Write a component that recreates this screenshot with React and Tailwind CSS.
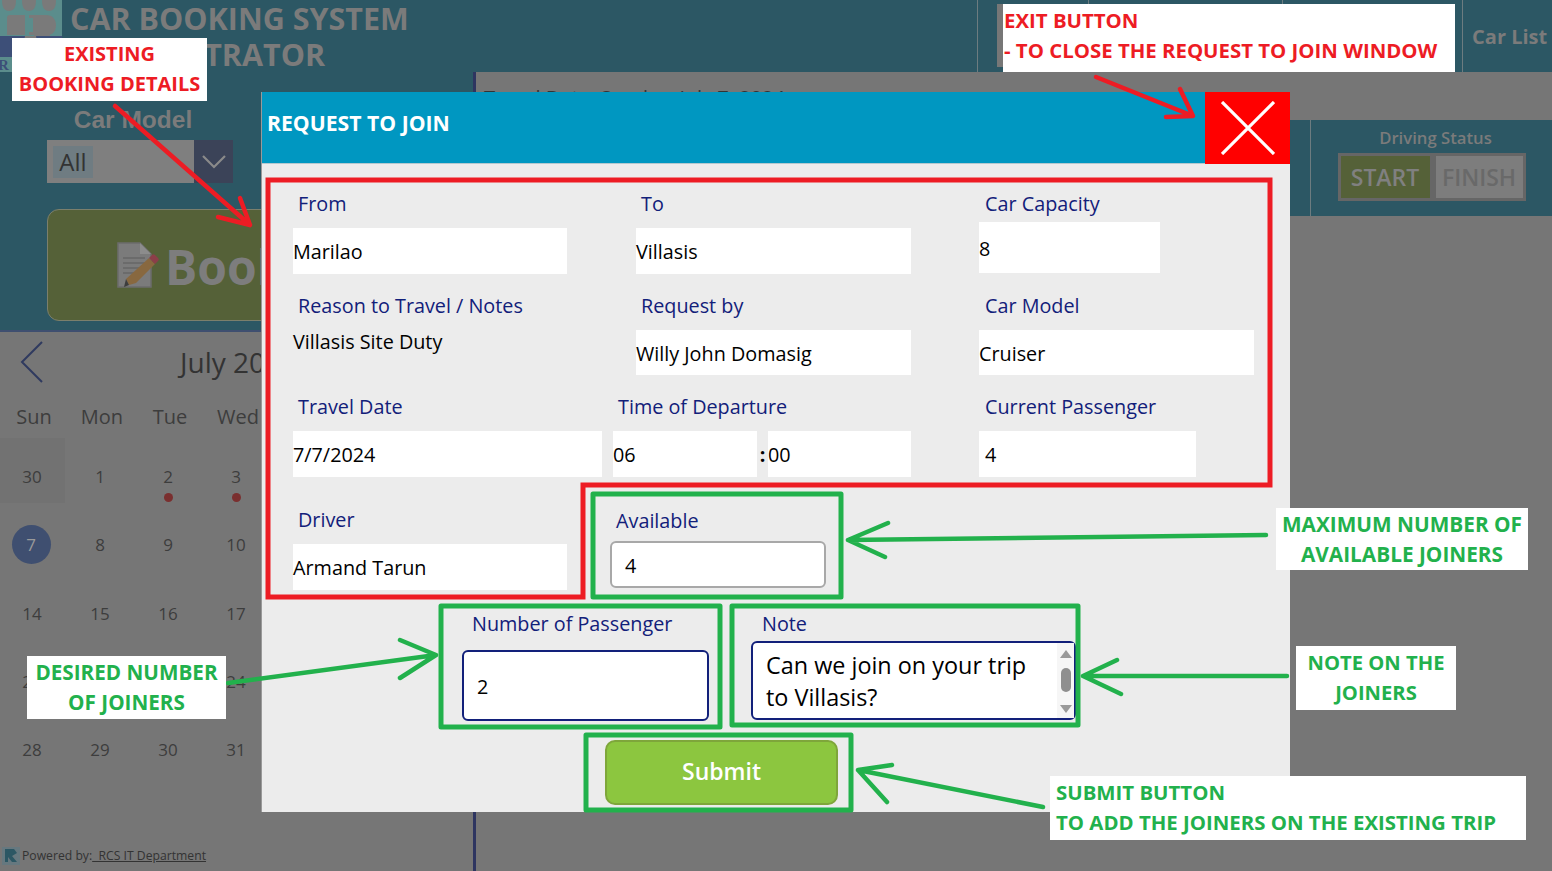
const WEEKDAYS = ["Sun", "Mon", "Tue", "Wed", "Thu", "Fri", "Sat"];
const DAYS = [
  30, 1, 2, 3, 4, 5, 6,
  7, 8, 9, 10, 11, 12, 13,
  14, 15, 16, 17, 18, 19, 20,
  21, 22, 23, 24, 25, 26, 27,
  28, 29, 30, 31, 1, 2, 3,
];

function Logo() {
  return (
    <svg width="62" height="72" viewBox="0 0 62 72" className="shrink-0">
      <rect width="62" height="72" fill="#5b8d8c" />
      <path d="M2 0h14c0 7-2 11-7 11S2 7 2 0ZM22 0h14c0 7-2 11-7 11S22 7 22 0ZM42 0h14c0 7-2 11-7 11S42 7 42 0Z" fill="#7a7a7a" />
      <path d="M7 18c0-2 1-3 3-3h36c7 0 10 5 10 10s-2 9-7 10H29V15h-4v20H7Z" fill="#7a7a7a" />
      <rect x="29" y="18" width="4" height="14" fill="#5b8d8c" />
      <path d="M34 35h16v1H34Z" fill="#7a7a7a" />
      <rect x="0" y="36" width="62" height="21" fill="#3d4f78" />
      <path d="M25 36h11l4 21H21Z" fill="#7a7a7a" />
      <rect x="0" y="57" width="62" height="15" fill="#5b8d8c" />
      <text x="-2" y="70" fontFamily="Liberation Serif, serif" fontWeight="700" fontSize="15" fill="#3d4f78">R</text>
    </svg>
  );
}

function BookIcon() {
  return (
    <svg width="42" height="46" viewBox="0 0 42 46" className="shrink-0">
      <path d="M1 1h22l11 11v33H1Z" fill="#7b7b7b" stroke="#6c6c6c" strokeWidth="1.5" />
      <path d="M23 1v11h11Z" fill="#8c8c8c" />
      <path d="M6 16h22M6 21h22M6 26h18M6 31h12" stroke="#676767" strokeWidth="1.5" />
      <path d="M9 37l3 6 7-2 19-19-6-6Z" fill="#88683f" />
      <path d="M32 16l3-3c1-1 2-1 3 0l3 3c1 1 1 2 0 3l-3 3Z" fill="#8b3f49" />
      <path d="M9 37l3 6-5 2Z" fill="#3d3d3d" />
    </svg>
  );
}

function Header() {
  return (
    <header className="flex h-[72px] bg-[#2c5764]">
      <Logo />
      <div className="ml-[8px] flex w-[900px] flex-col text-[30.5px] leading-[36px] font-bold text-[#7b7b7b]">
        <span>CAR BOOKING SYSTEM</span>
        <span>ADMINISTRATOR</span>
      </div>
      <div className="ml-[8px] h-full w-px bg-[#6d7c80]" />
      <div className="ml-[19px] mt-[4px] h-[63px] w-[6px] bg-[#777]" />
      <div className="ml-[85px] h-full w-px bg-[#6d7c80]" />
      <div className="ml-[193px] h-full w-px bg-[#6d7c80]" />
      <div className="ml-[179px] flex h-full w-[90px] items-center border-l border-[#6d7c80] pt-[2px] pl-[9px] text-[20px] font-bold whitespace-nowrap text-[#7b7b7b]">
        Car List
      </div>
    </header>
  );
}

function Sidebar() {
  return (
    <aside className="flex h-[799px] w-[473px] shrink-0 flex-col">
      <div className="flex h-[260px] flex-col border-b-2 border-[#3f4f70] bg-[#2c5764] px-[47px]">
        <div className="mt-[33px] w-[172px] text-center font-['Liberation_Sans'] text-[24.5px] leading-[30px] font-bold text-[#7b7b7b]">
          Car Model
        </div>
        <div className="mt-[5px] flex h-[43px] w-[186px] bg-[#7f7f7f]">
          <div className="flex flex-1 items-center pl-[6px]">
            <span className="flex h-[32px] w-[40px] items-center justify-center bg-[#6f7c82] text-[24px] text-[#333]">All</span>
          </div>
          <div className="flex w-[39px] items-center justify-center bg-[#3b4358]">
            <svg width="24" height="14" viewBox="0 0 24 14" fill="none" stroke="#8a8a8a" strokeWidth="2.2">
              <path d="M1 1l11 11L23 1" />
            </svg>
          </div>
        </div>
        <div className="mt-[26px] flex h-[112px] w-[300px] items-center rounded-[12px] border border-[#7b7f6c] bg-[#556138] pl-[69px]">
          <BookIcon />
          <span className="mt-[4px] ml-[6px] text-[48px] font-bold text-[#7d7d7d]">Book</span>
        </div>
      </div>
      <div className="relative flex-1">
        <div className="flex h-[67px] items-center pb-[8px] pl-[20px]">
          <svg width="24" height="42" viewBox="0 0 24 42" fill="none" stroke="#2f3a5f" strokeWidth="2">
            <path d="M22 1L2 21l20 20" />
          </svg>
          <span className="ml-[136px] text-[28px] whitespace-nowrap text-[#333]">July 2024</span>
        </div>
        <div className="grid w-[476px] grid-cols-7 text-center text-[20px] leading-[36px] text-[#3d3d3d]">
          {WEEKDAYS.map((day) => (
            <div key={day}>{day}</div>
          ))}
        </div>
        <div className="mt-[3px] grid w-[476px] grid-cols-7 text-center text-[17px] text-[#3d3d3d]">
          {DAYS.map((day, i) => (
            <div key={i} className="relative flex h-[68.3px] justify-center pr-[4px]">
              {i === 0 && <span className="absolute top-0 left-0 h-[65px] w-[65px] bg-[#727272]" />}
              {i === 7 ? (
                <span className="mt-[19px] -ml-[2px] flex h-[39px] w-[39px] items-center justify-center rounded-full bg-[#3f4f70] text-[#9a9a9a]">7</span>
              ) : (
                <span className="relative mt-[27px] leading-[24px]">{day}</span>
              )}
              {(i === 2 || i === 3) && (
                <span className="absolute top-[55px] h-[9px] w-[9px] rounded-full bg-[#7a2f2f]" />
              )}
            </div>
          ))}
        </div>
        <div className="absolute bottom-[6px] left-[2px] flex items-center gap-[2px] text-[12.2px] text-[#333]">
          <svg width="18" height="18" viewBox="0 0 18 18">
            <rect width="18" height="18" fill="#66787f" />
            <path d="M3 2h9l3 4-5 3 5 6h-5L6 10v5H3Z" fill="#2c5764" />
          </svg>
          <span>Powered by:<span className="underline"> &nbsp;RCS IT Department</span></span>
        </div>
      </div>
    </aside>
  );
}

function MainArea() {
  return (
    <main className="flex min-w-0 flex-1 flex-col">
      <div className="h-[48px] pt-[12px] pl-[8px] text-[20px] leading-[28px] text-[#333]">
        Travel Date: Sunday, July 7, 2024
      </div>
      <div className="ml-auto flex h-[96px] w-[262px] bg-[#2c5764]">
        <div className="ml-[20px] flex flex-1 flex-col items-center border-l border-[#6d7c80]">
          <span className="mt-[6px] ml-[8px] text-[16.7px] leading-[24px] font-semibold text-[#7b7b7b]">Driving Status</span>
          <div className="mt-[3px] flex h-[48px]">
            <div className="flex w-[95px] items-center justify-center border-[3px] border-[#666] bg-[#556138] text-[23px] font-semibold text-[#808080]">START</div>
            <div className="flex w-[93px] items-center justify-center border-[3px] border-[#666] bg-[#7d7d7d] text-[23px] font-semibold text-[#696969]">FINISH</div>
          </div>
        </div>
      </div>
    </main>
  );
}

function Field({ label, value, width, labelClass = "pl-[5px]", inputClass = "mt-[10px] h-[46px]", className = "" }) {
  return (
    <div className={`shrink-0 ${width} ${className}`}>
      <div className={`h-[28px] text-[19.8px] leading-[28px] text-[#12207a] ${labelClass}`}>{label}</div>
      <div className={`flex items-center bg-white pt-[2px] text-[19.8px] text-black ${inputClass}`}>{value}</div>
    </div>
  );
}

function RequestToJoin() {
  return (
    <section className="absolute top-[92px] left-[261px] h-[720px] w-[1029px] border-l border-[#999] bg-[#ececec]">
      <div className="flex h-[72px] items-center justify-between border-b border-[#b5c9cf] bg-[#0097c1]">
        <h1 className="mb-[10px] ml-[5px] text-[21.2px] font-bold text-white">REQUEST TO JOIN</h1>
        <button type="button" className="flex h-[72px] w-[85px] items-center justify-center bg-[#ff0000]">
          <svg width="54" height="54" viewBox="0 0 54 54" fill="none" stroke="#fff" strokeWidth="3.2">
            <path d="M1 1l52 52M53 1L1 53" />
          </svg>
        </button>
      </div>

      <div className="flex flex-col pt-[26px] pl-[31px]">
        <div className="flex h-[84px]">
          <Field width="w-[274px]" label="From" value="Marilao" />
          <Field width="w-[275px]" className="ml-[69px]" label="To" value="Villasis" />
          <Field width="w-[181px]" className="ml-[68px]" labelClass="pl-[6px]" label="Car Capacity" value="8" inputClass="mt-[4px] h-[51px]" />
        </div>
        <div className="mt-[18px] flex h-[83px]">
          <div className="w-[274px] shrink-0">
            <div className="h-[28px] pl-[5px] text-[19.8px] leading-[28px] text-[#12207a]">Reason to Travel / Notes</div>
            <div className="mt-[8px] text-[19.8px] leading-[28px] text-black">Villasis Site Duty</div>
          </div>
          <Field width="w-[275px]" className="ml-[69px]" label="Request by" value="Willy John Domasig" inputClass="mt-[10px] h-[45px]" />
          <Field width="w-[275px]" className="ml-[68px]" labelClass="pl-[6px]" label="Car Model" value="Cruiser" inputClass="mt-[10px] h-[45px]" />
        </div>
        <div className="mt-[18px] flex h-[84px]">
          <Field width="w-[309px]" label="Travel Date" value="7/7/2024" />
          <div className="ml-[11px] w-[298px] shrink-0">
            <div className="h-[28px] pl-[5px] text-[19.8px] leading-[28px] text-[#12207a]">Time of Departure</div>
            <div className="mt-[10px] flex h-[46px] text-[19.8px] text-black">
              <div className="flex w-[144px] items-center bg-white pt-[2px]">06</div>
              <div className="flex w-[11px] items-center justify-center pt-[2px] font-bold">:</div>
              <div className="flex w-[143px] items-center bg-white pt-[2px]">00</div>
            </div>
          </div>
          <Field width="w-[217px]" className="ml-[68px]" labelClass="pl-[6px]" label="Current Passenger" value={<span className="pl-[6px]">4</span>} />
        </div>
        <div className="mt-[29px] flex h-[84px]">
          <Field width="w-[274px]" label="Driver" value="Armand Tarun" />
          <Field
            width="w-[216px]"
            className="ml-[43px]"
            label="Available"
            labelClass="pl-[6px] pt-[1px]"
            value={<span className="pl-[13px]">4</span>}
            inputClass="mt-[7px] h-[47px] rounded-[6px] border-2 border-[#a8a8a8]"
          />
        </div>
        <div className="mt-[20px] flex pl-[169px]">
          <Field
            width="w-[247px]"
            label="Number of Passenger"
            labelClass="pl-[10px]"
            value={<span className="pl-[13px]">2</span>}
            inputClass="mt-[12px] h-[71px] rounded-[6px] border-2 border-[#12207a]"
          />
          <div className="ml-[42px] w-[325px] shrink-0">
            <div className="h-[28px] pl-[11px] text-[19.8px] leading-[28px] text-[#12207a]">Note</div>
            <div className="mt-[3px] flex h-[79px] rounded-[6px] border-2 border-[#12207a] bg-white">
              <div className="flex-1 pt-[6px] pr-[30px] pl-[13px] text-[23.4px] leading-[32px] text-black">
                Can we join on your trip to Villasis?
              </div>
              <div className="flex w-[17px] flex-col items-center bg-[#f6f6f6] pt-[7px] pb-[5px]">
                <span className="h-0 w-0 border-x-[6px] border-b-[8px] border-x-transparent border-b-[#9a9a9a]" />
                <span className="mt-[10px] h-[24px] w-[10px] rounded-full bg-[#8f8f8f]" />
                <span className="mt-auto h-0 w-0 border-x-[6px] border-t-[8px] border-x-transparent border-t-[#9a9a9a]" />
              </div>
            </div>
          </div>
        </div>
        <button
          type="button"
          className="mt-[19px] ml-[312px] flex h-[65px] w-[233px] items-center justify-center rounded-[10px] border-2 border-[#7ea63a] bg-[#8cc63f] pb-[2px] text-[23px] font-semibold text-white"
        >
          Submit
        </button>
      </div>
    </section>
  );
}

function Markup() {
  return (
    <svg width="1552" height="871" className="pointer-events-none absolute top-0 left-0" fill="none" strokeLinecap="round" strokeLinejoin="round">
      <g stroke="#ed1c24" strokeWidth="4.5">
        <path d="M268 180H1270V485H583V597H268Z" strokeWidth="5" strokeLinecap="butt" strokeLinejoin="miter" />
        <path d="M115 106L250 225M240 198L250 225L218 217" />
        <path d="M1096 77L1193 116M1180 89L1193 116L1166 117" />
      </g>
      <g stroke="#22b14c" strokeWidth="4.5">
        <rect x="593" y="494" width="248" height="103" strokeWidth="5" />
        <rect x="441" y="606" width="279" height="121" strokeWidth="5" />
        <rect x="732" y="606" width="346" height="119" strokeWidth="5" />
        <rect x="586" y="735" width="265" height="75" strokeWidth="5" />
        <path d="M1266 535L848 540M888 523L848 540L885 557" />
        <path d="M1287 676H1083M1117 660L1083 676L1121 694" />
        <path d="M228 683L436 655M400 640L436 655L400 678" />
        <path d="M1043 807L858 770M892 765L858 770L887 802" />
      </g>
    </svg>
  );
}

function Note({ className, lines }) {
  return (
    <div className={`absolute flex flex-col justify-center bg-white leading-[30px] font-bold whitespace-nowrap ${className}`}>
      {lines.map((line) => (
        <span key={line}>{line}</span>
      ))}
    </div>
  );
}

export default function App() {
  return (
    <div className="relative h-[871px] w-[1552px] overflow-hidden bg-[#767676] font-['Open_Sans',sans-serif]">
      <Header />
      <div className="flex">
        <Sidebar />
        <div className="h-[799px] w-[3px] shrink-0 bg-[#2e3560]" />
        <MainArea />
      </div>
      <RequestToJoin />
      <Markup />
      <Note className="top-[38px] left-[12px] h-[63px] w-[195px] pb-[1px] text-center text-[20px] text-[#ed1c24]" lines={["EXISTING", "BOOKING DETAILS"]} />
      <Note className="top-[4px] left-[1003px] h-[68px] w-[452px] pb-[6px] pl-[1px] text-[20.4px] text-[#ed1c24]" lines={["EXIT BUTTON", "- TO CLOSE THE REQUEST TO JOIN WINDOW"]} />
      <Note className="top-[508px] left-[1276px] h-[62px] w-[252px] text-center text-[20.8px] text-[#22b14c]" lines={["MAXIMUM NUMBER OF", "AVAILABLE JOINERS"]} />
      <Note className="top-[646px] left-[1296px] h-[64px] w-[160px] pb-[2px] text-center text-[20.2px] text-[#22b14c]" lines={["NOTE ON THE", "JOINERS"]} />
      <Note className="top-[656px] left-[27px] h-[63px] w-[199px] pb-[1px] text-center text-[20.7px] text-[#22b14c]" lines={["DESIRED NUMBER", "OF JOINERS"]} />
      <Note className="top-[776px] left-[1050px] h-[64px] w-[476px] pb-[2px] pl-[6px] text-[20.4px] text-[#22b14c]" lines={["SUBMIT BUTTON", "TO ADD THE JOINERS ON THE EXISTING TRIP"]} />
    </div>
  );
}
